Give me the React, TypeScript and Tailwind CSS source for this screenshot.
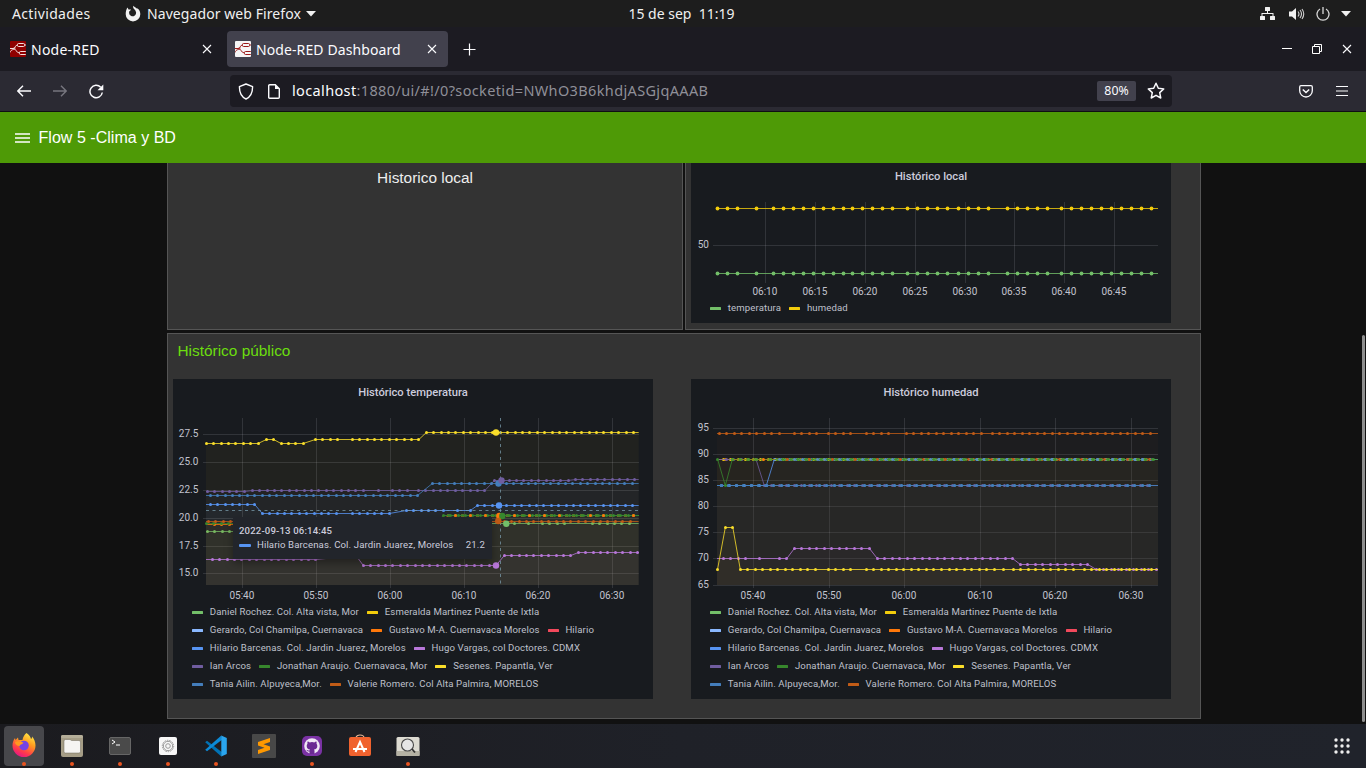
import React from "react";

type Seg = [x: number, n: number, y: number];
interface Line {
  color: string;
  segs: Seg[];
  end?: number;
  start?: number;
  fill?: number;
}

const UI = "font-['Noto_Sans',sans-serif]";
const GRAF = "font-[Roboto,sans-serif]";
const LIB = "font-['Liberation_Sans',sans-serif]";

const COL = {
  green: "#73bf69",
  gold: "#f2cc0c",
  sky: "#8ab8ff",
  orange: "#ff780a",
  red: "#f2495c",
  blue: "#5794f2",
  violet: "#b877d9",
  purple: "#705da0",
  forest: "#37872d",
  yellow: "#fade2a",
  steel: "#447ebc",
  rust: "#c15c17",
};

function Plot({ lines, step, bottom, right, r = 1.5 }: { lines: Line[]; step: number; bottom: number; right: number; r?: number }) {
  return (
    <g>
      {lines.map((l, i) => {
        const pts = l.segs.flatMap(([x, n, y]) => Array.from({ length: n }, (_, k) => [x + k * step, y] as const));
        const first = pts[0];
        const last = pts[pts.length - 1];
        const x0 = l.start ?? first[0];
        const x1 = l.end ?? right;
        const path = [[x0, first[1]], ...pts, [x1, last[1]]].map((p) => p.join(",")).join(" L");
        return (
          <g key={i}>
            {l.fill ? <path d={`M${path} L${x1},${bottom} L${x0},${bottom} Z`} fill={l.color} fillOpacity={l.fill} /> : null}
            <path d={`M${path}`} fill="none" stroke={l.color} strokeOpacity={0.8} strokeWidth={1} />
            {pts.map(([x, y], k) => (
              <circle key={k} cx={Math.round(x - 0.5) + 0.5} cy={y} r={r} fill={l.color} />
            ))}
          </g>
        );
      })}
    </g>
  );
}

function Grid({ xs, ys, x0, x1, y0, y1 }: { xs: number[]; ys: number[]; x0: number; x1: number; y0: number; y1: number }) {
  return (
    <g stroke="#ccccdc" strokeOpacity={0.14} strokeWidth={1}>
      {xs.map((x) => <line key={x} x1={x} x2={x} y1={y0} y2={y1 + 3} />)}
      {ys.map((y) => <line key={y} x1={x0 - 3} x2={x1} y1={y} y2={y} />)}
    </g>
  );
}

function Labels({ xs, xl, y, ys, yl, x }: { xs: number[]; xl: string[]; y: number; ys: number[]; yl: string[]; x: number }) {
  return (
    <g fill="#c2c3ce" fontSize="10" fontFamily="Roboto, sans-serif">
      {xl.map((t, i) => <text key={t} x={xs[i] - 0.6} y={y} textAnchor="middle">{t}</text>)}
      {yl.map((t, i) => <text key={t} x={x} y={ys[i] + 3} textAnchor="end">{t}</text>)}
    </g>
  );
}

const TENS = ["05:40", "05:50", "06:00", "06:10", "06:20", "06:30"];

function TemperatureChart() {
  const xs = [242.5, 316.5, 390.5, 464.5, 538.5, 612.5];
  const ys = [434.5, 462.5, 490.5, 518.5, 546.5, 573.5];
  const lines: Line[] = [
    { color: COL.yellow, start: 206, fill: 0.04, segs: [[206.3, 8, 443.5], [266.3, 2, 439.5], [281, 4, 443.5], [315.3, 4, 439.5], [352.3, 10, 439.5], [426.3, 29, 432.5]] },
    { color: COL.purple, start: 206, fill: 0.03, segs: [[207.3, 6, 491.5], [252.3, 16, 490.5], [378.3, 1, 490.5], [392.3, 3, 490.5], [418.3, 10, 490.5], [494.3, 11, 480.5], [575.3, 9, 479.5]] },
    { color: COL.steel, start: 206, fill: 0.03, segs: [[210.3, 29, 495.5], [432.3, 28, 483.5]] },
    { color: COL.blue, start: 206, fill: 0.03, segs: [[210.3, 7, 504.5], [262.3, 11, 513.5], [352.3, 6, 513.5], [406.3, 6, 510.5], [457.3, 1, 510.5], [470.3, 1, 510.5], [477.3, 22, 505.5]] },
    { color: COL.green, start: 206, fill: 0.03, segs: [[207.3, 5, 531.5], [480, 1, 531.5], [488, 1, 523.5], [506.3, 1, 523.5], [514.5, 1, 523.5], [528.3, 1, 523.5], [542.3, 4, 523.5], [592.3, 6, 523.5]] },
    { color: COL.orange, start: 206, fill: 0.03, segs: [[214.3, 3, 524.5], [440, 1, 524.5], [448, 26, 515.5]] },
    { color: COL.forest, start: 206, fill: 0.03, segs: [[206.3, 4, 523.5], [436, 1, 523.5], [443.3, 26, 515.5]] },
    { color: COL.rust, start: 206, fill: 0.03, segs: [[208.3, 58, 521.5]] },
    { color: COL.violet, start: 206, fill: 0.03, segs: [[212.3, 15, 559.5], [356, 1, 555.5], [363.3, 18, 565.5], [496, 1, 565.5], [504.3, 10, 555.5], [578.3, 9, 552.5]] },
  ];
  const marks: [number, number, string][] = [
    [496, 432.5, COL.yellow], [498.5, 483.5, COL.steel], [501.5, 480.5, COL.purple], [499, 505.5, COL.blue],
    [499.3, 516, COL.orange], [502.3, 516, COL.forest], [498.3, 521, COL.rust], [506.3, 523.7, COL.green], [496, 565.5, COL.violet],
  ];
  return (
    <svg className="block" width="480" height="199" viewBox="173 404 480 199">
      <Grid xs={xs} ys={ys} x0={206} x1={639} y0={418} y1={585} />
      <Plot lines={lines} step={7.4} bottom={585} right={638.7} />
      <path d="M444 515.5H639" stroke={COL.forest} strokeWidth="1" />
      <g fill={COL.forest}>
        {Array.from({ length: 26 }, (_, k) => <circle key={k} cx={Math.round(447.5 + k * 7.4) + 0.5} cy={515.5} r={1.4} />)}
      </g>
      <g fill={COL.orange}>
        {[455.5, 470.5, 485.5, 514.5, 529.5, 544.5, 559.5, 590.5, 603.5, 633.5].map((x) => <circle key={x} cx={x} cy={515.5} r={1.5} />)}
      </g>
      <path d="M500.5 418V585M206 510.5H639" stroke="#7fa3b4" strokeWidth="1" strokeDasharray="3 3.5" strokeOpacity={0.7} />
      {marks.map(([x, y, c], i) => <circle key={i} cx={x} cy={y} r={3.2} fill={c} />)}
      <Labels xs={xs} xl={TENS} y={599} ys={ys.map((y) => y - 0.4)} yl={["27.5", "25.0", "22.5", "20.0", "17.5", "15.0"]} x={198.3} />
    </svg>
  );
}

function HumidityChart() {
  const xs = [753.5, 829.5, 904.5, 980.5, 1055.5, 1131.5];
  const ys = [428.5, 454.5, 480.5, 506.5, 532.5, 558.5, 585.5];
  const y89 = 459.5;
  const lines: Line[] = [
    { color: COL.rust, start: 717, fill: 0.03, segs: [[719.3, 9, 433.5], [794.3, 4, 433.5], [828.3, 4, 433.5], [866.3, 4, 433.5], [906.3, 11, 433.5], [992.3, 22, 433.5]] },
    { color: COL.orange, start: 717, fill: 0.02, segs: [[725.3, 57, y89]] },
    { color: COL.gold, start: 717, fill: 0.02, segs: [[723, 57, y89]] },
    { color: COL.steel, start: 717, fill: 0.02, segs: [[721.3, 58, 485.5]] },
    { color: COL.purple, fill: 0.02, start: 717, segs: [[726, 5, y89], [764.3, 52, 485.5]] },
    { color: COL.blue, fill: 0.02, start: 717, segs: [[721.3, 1, 485.5], [729, 5, 485.5], [766.3, 1, 485.5], [774.3, 51, y89]] },
    { color: COL.steel, start: 717, segs: [[721.3, 58, 485.5]] },
    { color: COL.forest, start: 717, fill: 0.02, segs: [[717.7, 1, y89], [725.3, 1, 485.5], [732.3, 57, y89]] },
    { color: COL.violet, start: 717, fill: 0.02, segs: [[723.3, 3, 558.5], [745.3, 1, 558.5], [759.3, 1, 558.5], [779.3, 2, 558.5], [794.3, 11, 548.5], [877.3, 19, 558.5], [1020.3, 10, 564.5], [1096.3, 9, 569.5]] },
    { color: COL.yellow, start: 717, fill: 0.03, segs: [[717.5, 1, 569.5], [725.3, 2, 527.5], [740.3, 11, 569.5], [828.3, 4, 569.5], [866.3, 18, 569.5], [1003, 1, 569.5], [1013.3, 9, 569.5], [1084.3, 10, 569.5]] },
  ];
  return (
    <svg className="block" width="480" height="199" viewBox="691 404 480 199">
      <Grid xs={xs} ys={ys} x0={716} x1={1158} y0={418} y1={585} />
      <Plot lines={lines} step={7.52} bottom={585} right={1158} />
      <path d="M732 459.5H775" stroke="#8a8a20" strokeWidth="1" />
      <path d="M776 459.5H1158" stroke="#4c9a5a" strokeWidth="1" />
      {Array.from({ length: 50 }, (_, k) => (
        <g key={k}>
          <circle cx={Math.round(779 + k * 7.56) + 0.5} cy={y89} r={1.4} fill={k % 3 === 1 ? COL.rust : "#5b93b8"} />
          <circle cx={Math.round(782 + k * 7.56) + 0.5} cy={y89} r={1.4} fill="#3f8f30" />
        </g>
      ))}
      {[732.5, 740.5, 748.5, 756.5, 763.5, 770.5].map((x, k) => <circle key={x} cx={x} cy={y89} r={1.5} fill={k === 4 ? COL.orange : "#4f9a2c"} />)}
      <Labels xs={xs} xl={TENS} y={599} ys={ys.map((y) => y - 0.7)} yl={["95", "90", "85", "80", "75", "70", "65"]} x={709} />
    </svg>
  );
}

const LOCAL_X = [717.3, 727.3, 737.3, 756.3, 773.3, 783.3, 793.3, 803.3, 813.3, 823.3, 833.3, 843.3, 852.3, 862.3, 872.3, 882.3, 892.3, 907.3, 917.3, 927.3, 937.3, 947.3, 958.3, 968.3, 978.3, 988.3, 1007.3, 1017.3, 1027.3, 1037.3, 1047.3, 1061.3, 1071.3, 1081.3, 1091.3, 1101.3, 1111.3, 1121.3, 1131.3, 1141.3, 1151.3];

function LocalChart() {
  const xs = [765.5, 815.5, 865.5, 915.5, 965.5, 1014.5, 1064.5, 1114.5];
  const line = (color: string, y: number): Line => ({ color, segs: LOCAL_X.map((x): Seg => [x, 1, y]) });
  return (
    <svg className="block" width="480" height="111" viewBox="691 188 480 111">
      <Grid xs={xs} ys={[245.5]} x0={716} x1={1158} y0={202} y1={280} />
      <Plot lines={[line(COL.gold, 208.5), line(COL.green, 273.5)]} step={10} bottom={280} right={1158} r={1.9} />
      <Labels xs={xs} xl={["06:10", "06:15", "06:20", "06:25", "06:30", "06:35", "06:40", "06:45"]} y={295} ys={[245]} yl={["50"]} x={709} />
    </svg>
  );
}

const LEGEND: [string, string][][] = [
  [[COL.green, "Daniel Rochez. Col. Alta vista, Mor"], [COL.gold, "Esmeralda Martinez Puente de Ixtla"]],
  [[COL.sky, "Gerardo, Col Chamilpa, Cuernavaca"], [COL.orange, "Gustavo M-A. Cuernavaca Morelos"], [COL.red, "Hilario"]],
  [[COL.blue, "Hilario Barcenas. Col. Jardin Juarez, Morelos"], [COL.violet, "Hugo Vargas, col Doctores. CDMX"]],
  [[COL.purple, "Ian Arcos"], [COL.forest, "Jonathan Araujo. Cuernavaca, Mor"], [COL.yellow, "Sesenes. Papantla, Ver"]],
  [[COL.steel, "Tania Ailin. Alpuyeca,Mor."], [COL.rust, "Valerie Romero. Col Alta Palmira, MORELOS"]],
];

function Legend({ rows }: { rows: [string, string][][] }) {
  return (
    <div className="pl-[19px] text-[9.6px] tracking-[0.11px] text-[#bfc0cb]">
      {rows.map((row, i) => (
        <div key={i} className="flex h-[18px] items-center gap-[8px]">
          {row.map(([c, t]) => (
            <div key={t} className="flex items-center gap-[6.8px] whitespace-nowrap">
              <span className="mt-px h-[3px] w-[11px] rounded-[0.5px]" style={{ background: c }} />
              <span className="leading-[18px]">{t}</span>
            </div>
          ))}
        </div>
      ))}
    </div>
  );
}

function Panel({ title, className, children }: { title: string; className: string; children: React.ReactNode }) {
  return (
    <section className={`${className} ${GRAF} w-[480px] shrink-0 bg-[#181b1f]`}>
      <h3 className="h-[25px] text-center text-[11.2px] leading-[28px] font-medium text-[#ccccdc]">{title}</h3>
      {children}
    </section>
  );
}

function NodeRed({ dark }: { dark?: boolean }) {
  const s = dark ? "#f3dede" : "#9c1a1a";
  return (
    <svg width="16" height="16" viewBox="0 0 16 16">
      <rect width="16" height="16" rx="1" fill={dark ? "#8f0000" : "#f5f5f5"} />
      <g fill="none" stroke={s} strokeWidth="1">
        <rect x="7.500" y="2.500" width="7" height="3" rx="1" />
        <rect x="9.500" y="10.500" width="7" height="3" rx="1" />
        <path d="M0 7.500h3C5.500 7.500 5 4 7.500 4M14.500 4H16M3 7.500C6.500 7.500 6 12 9.500 12M0 11.500c1-3.500 4-2.500 5.500-4.500" />
      </g>
    </svg>
  );
}

function Cross({ className }: { className: string }) {
  return <svg className={className} viewBox="0 0 10 10"><path d="M1 1l8 8M9 1L1 9" stroke="currentColor" strokeWidth="1.1" /></svg>;
}

function TopBar() {
  return (
    <header className={`${UI} flex h-[27px] shrink-0 items-center bg-[#1d1d1d] text-[14px] text-[#f0f0f0]`}>
      <div className="flex flex-1 items-center pl-[12px]">
        <span className="w-[112px] tracking-[0.35px]">Actividades</span>
        <svg width="18" height="18" viewBox="0 0 18 18">
          <path d="M9.200.8c.8 1 2.400 1.700 3.600 2.800 1.700-.2 3.500 2.600 3.500 5.600a7.300 7.300 0 1 1-14.600 0C1.700 6.500 2.300 4 3.600 2.500l.9 2 2.600.1c-.4.7-1 1.200-1.900 1.900-.7 3.600 2.200 5.300 4.500 4.700 2.300-.8 3-3.200 1.900-5.200C10.800 4.300 8.600 3.600 9.200.8z" fill="#f0f0f0" />
        </svg>
        <span className="ml-[5px] tracking-[0.08px]">Navegador web Firefox</span>
        <svg className="ml-[5px]" width="10" height="6" viewBox="0 0 10 6"><path d="M0 0h10L5 5.5z" fill="#f0f0f0" /></svg>
      </div>
      <div className="text-[14px] whitespace-pre">15 de sep  11:19</div>
      <div className="flex flex-1 items-center justify-end pr-[15px]">
        <svg className="mr-[14px]" width="15" height="14" viewBox="0 0 15 14"><path d="M5.500 0h4q.5 0 .5.500v3q0 .5-.5.500H8v2h5.500v3h1q.5 0 .5.500v3q0 .5-.5.500h-4q-.5 0-.5-.5v-3q0-.5.5-.5h2V7h-10v2h2q.5 0 .5.500v3q0 .5-.5.500h-4q-.5 0-.5-.5v-3q0-.5.500-.5h1V6H7V4H5.500Q5 4 5 3.500v-3Q5 0 5.500 0z" fill="#f0f0f0" /></svg>
        <svg className="mr-[11px]" width="16" height="14" viewBox="0 0 16 14"><path d="M0 4.500h3L7 1v12L3 9.500H0z" fill="#f0f0f0" /><path d="M9 4.500q2 2.500 0 5M11 3q3 4 0 8M13 2q3.500 5 0 10" fill="none" stroke="#d0d0d0" strokeWidth="1.100" /></svg>
        <svg className="mr-[11px]" width="14" height="14" viewBox="0 0 14 14"><path d="M4 2a6 6 0 1 0 6 0M7 0v7" fill="none" stroke="#d8d8d8" strokeWidth="1.300" /></svg>
        <svg width="10" height="6" viewBox="0 0 10 6"><path d="M0 0h10L5 5.500z" fill="#f0f0f0" /></svg>
      </div>
    </header>
  );
}

function TabBar() {
  return (
    <div className={`${UI} flex h-[44px] shrink-0 items-center bg-[#1c1b22] text-[14px] text-[#fbfbfe]`}>
      <div className="flex h-[36px] w-[227px] items-center pl-[10px]">
        <NodeRed dark />
        <span className="ml-[5px] flex-1 tracking-[0.24px]">Node-RED</span>
        <Cross className="mr-[15px] size-[10px]" />
      </div>
      <div className="flex h-[36px] w-[221px] items-center rounded-[4px] bg-[#42414d] pl-[8px]">
        <NodeRed />
        <span className="ml-[5px] flex-1 tracking-[0.1px] whitespace-nowrap">Node-RED Dashboard</span>
        <Cross className="mr-[11px] size-[10px]" />
      </div>
      <svg className="ml-[15px]" width="13" height="13" viewBox="0 0 13 13"><path d="M6.500.5v12M.5 6.500h12" stroke="#fbfbfe" strokeWidth="1.200" /></svg>
      <div className="flex flex-1 items-center justify-end gap-[20px] pr-[14px]">
        <svg width="10" height="10" viewBox="0 0 10 10"><path d="M0 4.500h10" stroke="#fff" /></svg>
        <svg width="10" height="10" viewBox="0 0 10 10"><path d="M.5 2.500h7v7h-7zM2.500 2.500v-2h7v7h-2" fill="none" stroke="#fff" /></svg>
        <Cross className="size-[10px]" />
      </div>
    </div>
  );
}

function ToolBar() {
  return (
    <div className={`${UI} flex h-[41px] shrink-0 items-center border-b border-[#0f0e13] bg-[#2b2a33] text-[#fbfbfe]`}>
      <div className="flex w-[230px] items-center gap-[22px] pl-[17px]">
        <svg width="14" height="12" viewBox="0 0 14 12"><path d="M14 6H1M6 .7L.8 6 6 11.300" fill="none" stroke="#fbfbfe" strokeWidth="1.400" /></svg>
        <svg width="14" height="12" viewBox="0 0 14 12"><path d="M0 6h13M8 .7L13.200 6 8 11.300" fill="none" stroke="#77767f" strokeWidth="1.400" /></svg>
        <svg width="15" height="15" viewBox="0 0 15 15"><path d="M13.300 8.500a6.200 6.200 0 1 1-1.600-5.200" fill="none" stroke="#fbfbfe" strokeWidth="1.500" /><path d="M14.300.5v5.800H8.500z" fill="#fbfbfe" /></svg>
      </div>
      <div className="flex h-[32px] w-[942px] items-center rounded-[4px] bg-[#1c1b22] pl-[8px]">
        <svg width="16" height="17" viewBox="0 0 16 17"><path d="M8 1l6.600 2.700c0 5-1.300 9.800-6.600 12.300C2.700 13.500 1.400 8.700 1.400 3.700z" fill="none" stroke="#fbfbfe" strokeWidth="1.400" strokeLinejoin="round" /></svg>
        <svg className="ml-[14px]" width="12" height="15" viewBox="0 0 12 15"><path d="M1.700.8h5.600l4 4v8.400q0 1-1 1H1.700q-1 0-1-1V1.800q0-1 1-1z" fill="none" stroke="#fbfbfe" strokeWidth="1.400" /><path d="M7 .5V5h4.500z" fill="#fbfbfe" /></svg>
        <span className="ml-[12px] flex-1 text-[14.5px] tracking-[0.36px] whitespace-nowrap text-[#8f8f98]"><span className="text-[#fbfbfe]">localhost</span>:1880/ui/#!/0?socketid=NWhO3B6khdjASGjqAAAB</span>
        <span className="mr-[11px] flex h-[20px] w-[39px] items-center justify-center rounded-[2px] bg-[#42414d] pt-px text-[12.3px]">80%</span>
        <svg className="mr-[7px]" width="18" height="18" viewBox="0 0 17 17"><path d="M8.500 1.200l2.200 4.700 5.100.6-3.800 3.500 1 5.100-4.500-2.500-4.500 2.500 1-5.100L1.200 6.500l5.100-.6z" fill="none" stroke="#fbfbfe" strokeWidth="1.400" strokeLinejoin="round" /></svg>
      </div>
      <div className="flex flex-1 items-center justify-end gap-[23px] pr-[18px]">
        <svg width="14" height="13" viewBox="0 0 14 13"><path d="M2 .7h10q1.300 0 1.300 1.300v3.700a6.300 6.300 0 0 1-12.600 0V2Q.7.700 2 .7z" fill="none" stroke="#fbfbfe" strokeWidth="1.300" /><path d="M3.800 4.500L7 7.500l3.200-3" fill="none" stroke="#fbfbfe" strokeWidth="1.500" /></svg>
        <svg width="12" height="10" viewBox="0 0 12 10"><path d="M0 .5h12M0 5h12M0 9.500h12" stroke="#fbfbfe" strokeWidth="1.200" /></svg>
      </div>
    </div>
  );
}

function Tooltip() {
  return (
    <div className="absolute top-[138px] left-[60px] h-[42px] w-[259px] bg-[#22252b] pt-[7px] pl-[6px] text-[#ccccdc] shadow-[0_4px_8px_rgba(0,0,0,0.35)]">
      <div className="h-[14px] text-[9.6px] leading-[14px] font-medium tracking-[0.15px]">2022-09-13 06:14:45</div>
      <div className="flex h-[14px] items-center pr-[7px] text-[9.6px] leading-[14px] tracking-[0.12px]">
        <span className="mr-[6px] h-[3px] w-[12px] rounded-[1px] bg-[#5794f2]" />
        <span className="flex-1 whitespace-nowrap">Hilario Barcenas. Col. Jardin Juarez, Morelos</span>
        <span>21.2</span>
      </div>
    </div>
  );
}

function Dashboard() {
  return (
    <main className={`${LIB} relative h-[561px] shrink-0 overflow-hidden bg-[#111111] pl-[167px]`}>
      <div className="flex w-[1034px] gap-[2px]">
        <div className="h-[167px] w-[516px] border border-t-0 border-[#555] bg-[#333] pt-[5px] text-center text-[15.4px] leading-[20px] text-[#eee]">Historico local</div>
        <div className="h-[167px] w-[516px] border border-t-0 border-[#555] bg-[#333] pl-[5px]">
          <Panel title="Histórico local" className="h-[160px]">
            <LocalChart />
            <Legend rows={[[[COL.green, "temperatura"], [COL.gold, "humedad"]]]} />
          </Panel>
        </div>
      </div>
      <div className="mt-[3px] h-[386px] w-[1034px] border border-[#555] bg-[#333] pl-[5px]">
        <h2 className="h-[45px] pt-[7px] pl-[4.5px] text-[15.4px] leading-[20px] text-[#6bde0e]">Histórico público</h2>
        <div className="flex gap-[38px]">
          <Panel title="Histórico temperatura" className="relative h-[320px]">
            <TemperatureChart />
            <Legend rows={LEGEND} />
            <Tooltip />
          </Panel>
          <Panel title="Histórico humedad" className="h-[320px]">
            <HumidityChart />
            <Legend rows={LEGEND} />
          </Panel>
        </div>
      </div>
      <div className="absolute top-[172px] right-px h-[387px] w-[3px] rounded-full bg-[#8f8f8f]" />
    </main>
  );
}

const DOCK: { dot: boolean; active?: boolean; icon: React.ReactNode }[] = [
  {
    dot: true,
    active: true,
    icon: (
      <svg width="24" height="24" viewBox="0 0 24 24">
        <defs><linearGradient id="ff" x1="0.8" y1="0" x2="0.3" y2="1"><stop offset="0" stopColor="#fff14a" /><stop offset=".4" stopColor="#ff9a1f" /><stop offset=".75" stopColor="#ff3b4a" /><stop offset="1" stopColor="#e31587" /></linearGradient></defs>
        <path d="M14.500 0c3 2 4 4 4.500 6 1-.5 1-1.500 1-2.500 2 2 3.500 5.500 3.500 9A11.500 11.500 0 0 1 .5 12.500C.5 9.500 1.500 7 3 5l.5 2L6 4.500l.5 2.500h4C11 4 12.500 1.500 14.500 0z" fill="url(#ff)" />
        <circle cx="12" cy="12.500" r="4.800" fill="#7542e5" />
        <path d="M3 9c3-2 6 0 8.500.5-.5 1.800-3 1.500-4 3.500C5 13 3 11 3 9z" fill="#ff9a1f" />
      </svg>
    ),
  },
  { dot: true, icon: <svg width="24" height="24" viewBox="0 0 24 24"><rect x="1" y="1" width="22" height="22" rx="2" fill="#a59d86" /><rect x="1" y="1" width="22" height="3" rx="1.500" fill="#b5ae99" /><path d="M4 7q0-1.500 1.500-1.500H10l1.500 1h7.500q1.500 0 1.500 1.500v9.500q0 1.500-1.500 1.500H5.500Q4 19 4 17.500z" fill="#f5f4f2" stroke="#6f6959" strokeWidth=".5" /></svg> },
  { dot: true, icon: <svg width="24" height="24" viewBox="0 0 24 24"><rect x="1.500" y="3.500" width="21" height="17" rx="1.500" fill="#4a4a4a" stroke="#666" /><path d="M4 6l3 2-3 2M8 11h4" fill="none" stroke="#fff" /></svg> },
  { dot: true, icon: <svg width="24" height="24" viewBox="0 0 24 24"><rect x="3" y="3" width="18" height="18" rx="2" fill="#f7f7f7" /><circle cx="12" cy="12" r="5.700" fill="none" stroke="#999" strokeDasharray="1.500 1" /><circle cx="12" cy="12" r="4.700" fill="none" stroke="#999" /><circle cx="12" cy="12" r="2.300" fill="none" stroke="#999" /></svg> },
  { dot: true, icon: <svg width="24" height="24" viewBox="0 0 24 24"><path d="M1.200 8.300L3 6.700l15 11.500-.7 4.300z" fill="#0072b5" /><path d="M1.200 15.700L3 17.300 18 5.800l-.7-4.300z" fill="#0c8ad6" /><path d="M17.300 1.500L22.800 4v16l-5.500 2.500z" fill="#2aa5ee" /></svg> },
  { dot: false, icon: <svg width="24" height="24" viewBox="0 0 24 24"><rect width="24" height="24" rx="1" fill="#484848" /><path d="M18 4v4l-6.500 2.300L18 12.500V16l-12 4v-4l6.500-2.200L6 11.500V8z" fill="#ff9800" /></svg> },
  { dot: true, icon: <svg width="24" height="24" viewBox="0 0 24 24"><rect x="2" y="2" width="20" height="20" rx="5" fill="#7a32a4" /><path d="M12 4A8 8 0 0 0 9.300 19.500v-2.300c-2.300.5-2.800-1-3.300-1.800 1.600 0 1.600 1.300 3.300.8l.5-1c-2-.3-3.500-1.200-3.500-3.700q0-1.500.8-2.400-.3-1 .1-2.300 1.200.1 2.300.9a8 8 0 0 1 5 0q1.100-.8 2.300-.9.400 1.300.1 2.300.8.900.8 2.400c0 2.500-1.500 3.400-3.500 3.700q.5.600.5 1.600v2.700A8 8 0 0 0 12 4z" fill="#7a32a4" /><circle cx="12" cy="12" r="7.800" fill="#f0e8f5" /><path d="M9.500 20v-2.600c-2.200.4-2.700-.9-3.200-1.700 1.500 0 1.600 1.200 3.200.7l.5-1c-2-.3-3.300-1.300-3.300-3.500q0-1.400.8-2.200-.3-1 .1-2.100 1.200.1 2.100.8a7 7 0 0 1 4.600 0q.9-.7 2.100-.8.400 1.100.1 2.100.8.800.8 2.200c0 2.200-1.300 3.200-3.300 3.500q.5.600.5 1.500V20z" fill="#6b2a93" /></svg> },
  { dot: false, icon: <svg width="24" height="24" viewBox="0 0 24 24"><path d="M8 4c0-4 8-4 8 0" fill="none" stroke="#e8b89a" strokeWidth="1.200" /><rect x="1" y="3" width="22" height="19" rx="2" fill="#f0622e" /><path d="M7.500 18L12 8l4.500 10M5 15h14" fill="none" stroke="#fff" strokeWidth="2" /></svg> },
  { dot: true, icon: <svg width="24" height="24" viewBox="0 0 24 24"><rect x=".5" y="3" width="23" height="19" rx="1.500" fill="#dddbd2" /><rect x=".5" y="17" width="23" height="5" fill="#b5b2a4" /><circle cx="11.500" cy="11" r="6" fill="#e5e5e5" stroke="#4a4a4a" strokeWidth="1.100" /><path d="M16 15l3 3.500" stroke="#333" strokeWidth="1.800" /></svg> },
];

function Dock() {
  return (
    <footer className="flex h-[44px] shrink-0 items-start bg-gradient-to-r from-[#1b1b1f] via-[#1f2128] to-[#20232b] pt-[2px] pl-[4px]">
      {DOCK.map((d, i) => (
        <div key={i} className={d.active ? "mr-[8px] flex h-[40px] w-[40px] flex-col items-center rounded-[4px] bg-[#47474b] pt-[7px]" : "mr-[8px] flex h-[40px] w-[40px] flex-col items-center pt-[8px]"}>
          {d.icon}
          {d.dot && <span className={d.active ? "mt-[5px] size-[4px] shrink-0 rounded-full bg-[#e95420]" : "mt-[4px] size-[4px] shrink-0 rounded-full bg-[#e95420]"} />}
        </div>
      ))}
      <svg className="mt-[12px] mr-[16px] ml-auto" width="16" height="16" viewBox="0 0 16 16" fill="#eee">
        {[2, 8, 14].flatMap((y) => [2, 8, 14].map((x) => <circle key={`${x}-${y}`} cx={x} cy={y} r="1.7" />))}
      </svg>
    </footer>
  );
}

export default function App() {
  return (
    <div className="flex h-[768px] w-[1366px] flex-col overflow-hidden bg-[#111]">
      <TopBar />
      <TabBar />
      <ToolBar />
      <div className={`${LIB} flex h-[51px] shrink-0 items-center bg-[#4e9a06] pl-[15px] text-[16px] text-white`}>
        <svg width="15" height="10" viewBox="0 0 15 10"><path d="M0 1h15M0 5h15M0 9h15" stroke="#fff" strokeWidth="1.7" /></svg>
        <span className="ml-[8.5px] tracking-[0.03px]">Flow 5 -Clima y BD</span>
      </div>
      <Dashboard />
      <Dock />
    </div>
  );
}
